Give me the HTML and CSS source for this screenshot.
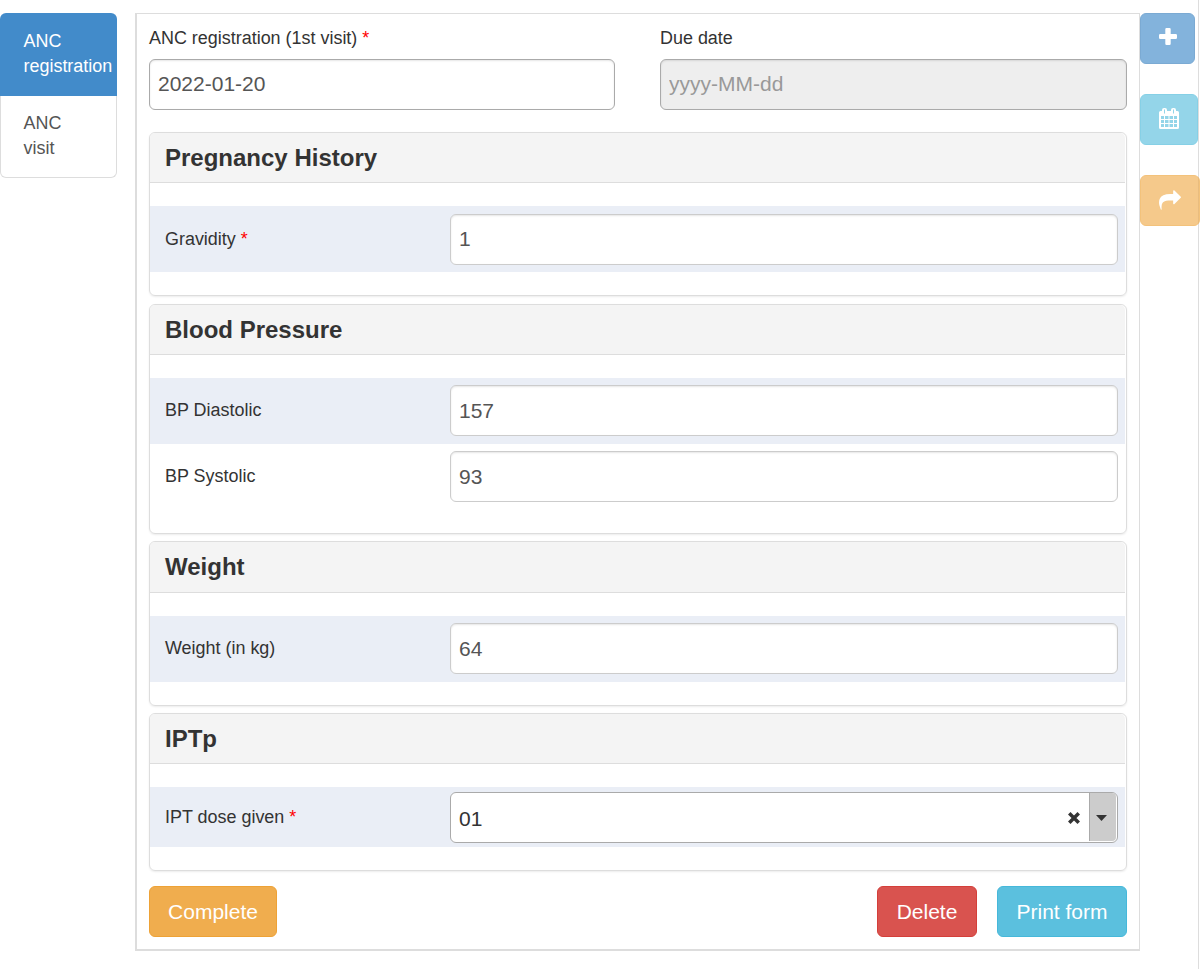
FILE: index.html
```html
<!DOCTYPE html>
<html lang="en">
<head>
<meta charset="utf-8">
<title>ANC registration</title>
<link rel="stylesheet" href="styles.css">
</head>
<body>
<div class="page">
  <nav class="stages">
    <a class="stage stage-active">ANC registration</a>
    <a class="stage">ANC<br>visit</a>
  </nav>
  <main class="event">
    <div class="dates">
      <label class="date-field">
        <span class="label">ANC registration (1st visit) <span class="required">*</span></span>
        <input class="input input-date" type="text" value="2022-01-20">
      </label>
      <label class="date-field">
        <span class="label">Due date</span>
        <input class="input input-date input-disabled" type="text" placeholder="yyyy-MM-dd" disabled>
      </label>
    </div>
    <section class="panel panel-history">
      <h2 class="panel-title">Pregnancy History</h2>
      <div class="panel-body">
        <div class="row row-shaded"><span class="label">Gravidity <span class="required">*</span></span><input class="input" type="text" value="1"></div>
      </div>
    </section>
    <section class="panel panel-pressure">
      <h2 class="panel-title">Blood Pressure</h2>
      <div class="panel-body">
        <div class="row row-shaded"><span class="label">BP Diastolic</span><input class="input" type="text" value="157"></div>
        <div class="row"><span class="label">BP Systolic</span><input class="input" type="text" value="93"></div>
      </div>
    </section>
    <section class="panel panel-weight">
      <h2 class="panel-title">Weight</h2>
      <div class="panel-body">
        <div class="row row-shaded"><span class="label">Weight (in kg)</span><input class="input" type="text" value="64"></div>
      </div>
    </section>
    <section class="panel panel-ipt">
      <h2 class="panel-title">IPTp</h2>
      <div class="panel-body">
        <div class="row row-shaded row-select"><span class="label">IPT dose given <span class="required">*</span></span>
          <div class="select">
            <span class="select-value">01</span>
            <svg class="select-clear" width="12" height="12" viewBox="0 0 12 12"><path d="M2.500 2.500 9.500 9.500M9.500 2.500 2.500 9.500" stroke="#333" stroke-width="3.500" stroke-linecap="square"/></svg>
            <span class="select-toggle"><svg width="11" height="6" viewBox="0 0 11 6"><path d="M0 0h11L5.5 6z" fill="#333"/></svg></span>
          </div>
        </div>
      </div>
    </section>
    <div class="actions">
      <button class="btn btn-warning">Complete</button>
      <button class="btn btn-danger">Delete</button>
      <button class="btn btn-info">Print form</button>
    </div>
  </main>
  <aside class="tools">
    <button class="tool tool-add" aria-label="Add"><svg width="18" height="17" viewBox="0 0 18 17"><path d="M7.5 0h3q1.200 0 1.200 1.200V6h5q1.300 0 1.300 1.300v2.400q0 1.300-1.300 1.300h-5v4.800q0 1.200-1.200 1.200h-3q-1.200 0-1.200-1.200V11h-5Q0 11 0 9.700V7.300Q0 6 1.300 6h5V1.200Q6.300 0 7.500 0z" fill="#fff"/></svg></button>
    <button class="tool tool-schedule" aria-label="Schedule"><svg width="20" height="21" viewBox="0 0 20 21"><path fill="#fff" fill-rule="evenodd" d="M1.500 3H3V2Q3 0 5 0h1q2 0 2 2v1h4V2q0-2 2-2h1q2 0 2 2v1h1.500Q20 3 20 4.500v15q0 1.500-1.500 1.500h-17Q0 21 0 19.500v-15Q0 3 1.500 3zM5 1.500v4h1v-4zM14 1.500v4h1v-4zM2 8v3h3V8zM6 8v3h3.500V8zM10.500 8v3H14V8zM15 8v3h3V8zM2 12v3h3v-3zM6 12v3h3.500v-3zM10.500 12v3H14v-3zM15 12v3h3v-3zM2 16v3h3v-3zM6 16v3h3.500v-3zM10.500 16v3H14v-3zM15 16v3h3v-3z"/></svg></button>
    <button class="tool tool-refer" aria-label="Refer"><svg width="22" height="20" viewBox="0 0 1792 1600"><path fill="#fff" d="M1792 512q0 26-19 45l-512 512q-19 19-45 19t-45-19-19-45V768H928q-98 0-175.500 6T599 795.500 463.500 838 358 906.500 275.500 1006 225 1142.500 208 1320q0 55 5 123 0 6 2.500 23.500T218 1493q0 15-8.500 25t-23.500 10q-16 0-28-17-7-9-13-22t-13.500-30-10.500-24Q0 1150 0 984q0-199 53-333Q215 256 928 256h224V0q0-26 19-45t45-19 45 19l512 512q19 19 19 45z" transform="translate(0 64)"/></svg></button>
  </aside>
</div>
</body>
</html>
```
FILE: styles.css
```css
* { box-sizing: border-box; }
body {
  margin: 0;
  background: #fff;
  color: #333;
  font-family: "Liberation Sans", Arial, sans-serif;
  font-size: 17.96px;
}
.page {
  display: flex;
  align-items: flex-start;
  width: 1199px;
  height: 969px;
  padding-top: 13px;
  border-right: 1px solid #ddd;
}
.stages {
  flex: none;
  width: 117px;
  margin-right: 18px;
}
.stage {
  display: block;
  height: 82px;
  padding: 15px 0 0 22.5px;
  border: 1px solid #ddd;
  border-top: 0;
  border-radius: 0 0 6px 6px;
  color: #555;
  line-height: 25px;
}
.stage-active {
  height: 83px;
  padding: 16px 0 0 23.5px;
  border: 0;
  border-radius: 6px 6px 0 0;
  background: #428bca;
  color: #fff;
}
.event {
  flex: none;
  width: 1005px;
  height: 938px;
  padding: 12px 12px 0;
  border: solid #ddd;
  border-width: 1px 1px 2px 2px;
}
.dates {
  display: grid;
  grid-template-columns: 466px 467px;
  justify-content: space-between;
  height: 106px;
}
.date-field .label {
  display: block;
  height: 33px;
  line-height: 24px;
}
.required { color: #f00; }
.input {
  display: block;
  width: 668px;
  height: 51px;
  padding: 0 8px;
  border: 1px solid #ccc;
  border-radius: 6px;
  background: #fff;
  box-shadow: inset 0 1px 2px rgba(0, 0, 0, .1);
  color: #555;
  font: 21px "Liberation Sans", Arial, sans-serif;
}
.input-date { width: 100%; padding: 0 8px 2px; border-color: #aaa; }
.input-disabled { background: #eee; }
.input::placeholder { color: #999; }
.panel {
  height: 164px;
  margin-bottom: 8px;
  padding-right: 1px;
  border: 1px solid #ddd;
  border-radius: 6px;
  box-shadow: 0 1px 2px rgba(0, 0, 0, .08);
}
.panel-title {
  height: 50px;
  margin: 0;
  padding-left: 15px;
  border-bottom: 1px solid #ddd;
  border-radius: 5px 5px 0 0;
  background: #f4f4f4;
  font-size: 24px;
  line-height: 49px;
}
.panel-body { padding-top: 23px; }
.row {
  display: grid;
  grid-template-columns: 285px 668px;
  align-items: start;
  height: 66px;
  padding: 7px 0 0 15px;
}
.row-shaded { background: #eaeef6; }
.row .label { line-height: 50px; }
.panel-history .row { padding-top: 8px; }
.panel-history .input { padding-bottom: 2px; }
.panel-pressure { height: 230px; margin-bottom: 7px; }
.panel-weight { height: 165px; margin-bottom: 7px; }
.panel-weight .panel-title { height: 51px; }
.panel-ipt { height: 158px; margin-bottom: 15px; }
.row-select { height: 60px; padding-top: 5px; }
.select {
  display: flex;
  align-items: center;
  height: 51px;
  padding: 0 1px 1px 8px;
  border: 1px solid #aaa;
  border-radius: 6px;
  background: #fff;
  font-size: 21px;
}
.select-value { flex: 1; padding-top: 4px; }
.select-clear { margin: 2px 9px 0 0; }
.select-toggle {
  display: flex;
  align-items: center;
  justify-content: center;
  align-self: stretch;
  width: 27px;
  padding: 2px 3px 0 0;
  border-left: 1px solid #aaa;
  border-radius: 0 4px 4px 0;
  background: #ccc;
}
.actions { display: flex; gap: 20px; }
.btn {
  height: 51px;
  padding: 0;
  border: 1px solid;
  border-radius: 6px;
  color: #fff;
  font: 21px "Liberation Sans", Arial, sans-serif;
}
.btn-warning { width: 128px; margin-right: auto; background: #f0ad4e; border-color: #eea236; }
.btn-danger { width: 100px; background: #d9534f; border-color: #d43f3a; }
.btn-info { width: 130px; background: #5bc0de; border-color: #46b8da; }
.tools {
  display: flex;
  flex: none;
  flex-direction: column;
  gap: 30px;
}
.tool {
  display: flex;
  align-items: flex-start;
  height: 51px;
  padding: 14px 0 0 18px;
  border: 1px solid;
  border-radius: 6px;
  opacity: .65;
}
.tool-add { width: 55px; background: #428bca; border-color: #357ebd; }
.tool-schedule { width: 58px; padding-top: 13px; background: #5bc0de; border-color: #46b8da; }
.tool-refer { width: 60px; background: #f0ad4e; border-color: #eea236; }
```
